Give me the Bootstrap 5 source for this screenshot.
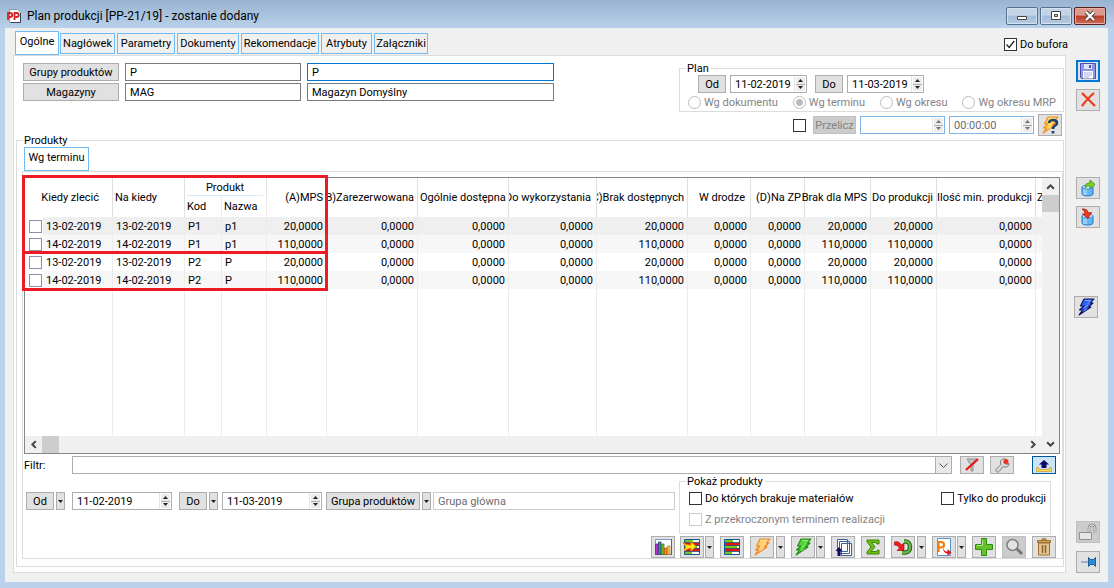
<!DOCTYPE html>
<html lang="pl">
<head>
<meta charset="utf-8">
<meta name="viewport" content="width=device-width, initial-scale=1">
<title>Plan produkcji [PP-21/19]</title>
<link href="https://cdn.jsdelivr.net/npm/bootstrap@5.3.0/dist/css/bootstrap.min.css" rel="stylesheet">
<style>
  body { font: 11px/13px Roboto, sans-serif; color: #000; background: #b9d1ea; min-height: 100vh; }
  button, input, select { font: inherit; color: inherit; border-radius: 0; }
  svg { display: block; }
  .titlebar { height: 28px; padding: 0 8px 0 6px; background: linear-gradient(#99b4d1, #b9d1ea); }
  .titlebar h1 { font: 12px/16px Roboto, sans-serif; margin: 4px 0 0 5px; }
  .winbtns { gap: 2px; }
  .winbtn { width: 32px; height: 18px; padding: 0; border: 1px solid #56708f; border-radius: 2px; background: linear-gradient(#c3d4e7 45%, #a3bcd8 50%, #b5cbe3); box-shadow: inset 0 0 0 1px #d5e2f0; }
  .winbtn.shut { border-color: #5c2018; background: linear-gradient(#dc9a8e 45%, #b93c25 50%, #cf6c55); box-shadow: inset 0 0 0 1px #e6b0a6; }
  .client { margin: 0 6px 6px 5px; background: #f0f0f0; }
  .tabrow { height: 27px; padding: 0 40px 0 10px; }
  .tab { height: 21px; padding: 0 1px; margin: 0 1px 1px; border: 1px solid #70baf5; background: #f0f0f0; text-align: center; white-space: nowrap; }
  .tab.on { height: 24px; background: #fff; margin: 0; padding-bottom: 3px; }
  .sheet { border: 1px solid #dcdcdc; background: #fff; margin: 0 0 9px 8px; min-width: 0; }
  .sidebar { width: 42px; padding: 5px 0 9px 10px; }
  .btn-w { height: 18px; border: 1px solid #adadad; background: #e1e1e1; padding: 0; text-align: center; white-space: nowrap; flex: none; }
  .btn-w:disabled { background: #ccc; border-color: #bfbfbf; color: #838383; }
  .tool { width: 24px; height: 22px; display: flex; align-items: center; justify-content: center; }
  .tool.low { height: 18px; }
  .tool svg { width: 20px; height: 18px; flex: none; }
  .tool.low svg { height: 16px; }
  .tool.focus-on { border: 2px solid #0078d7; }
  .tool.pressed { background: #cce4f7; border-color: #005499; }
  .drop { width: 9px; display: flex; align-items: center; justify-content: center; }
  .drop svg, .tool.drop svg { width: 5px; height: 3px; flex: none; }
  .w28 { width: 28px; } .w42 { width: 43px; } .w94 { width: 94px; }
  .box { height: 18px; border: 1px solid #7a7a7a; padding: 0 4px; background: #fff; min-width: 0; outline: none; }
  .box:disabled { border-color: #ccc; color: #6d6d6d; background: #fff; }
  .box.live { border-color: #0078d7; }
  .fields { display: grid; grid-template-columns: 96px 176px 247px; column-gap: 6px; row-gap: 2px; padding: 7px 0 0 9px; }
  .spin { display: flex; height: 18px; border: 1px solid #adadad; background: #fff; flex: none; }
  .spin input { flex: 1; min-width: 0; border: 0; padding: 0 0 0 4px; background: none; outline: none; }
  .spin input:disabled { color: #6d6d6d; }
  .spin.off { border-color: #7eb4ea; }
  .spin div { width: 12px; display: flex; flex-direction: column; border-left: 1px solid #e4e4e4; padding: 1px; }
  .spin div button { flex: 1; border: 0; padding: 0; background: #ececec; display: flex; align-items: center; justify-content: center; }
  .spin div button + button { border-top: 1px solid #adadad; }
  .spin div svg { width: 5px; height: 3px; }
  .spin.off svg { opacity: .6; }
  .w77 { width: 77px; } .w85 { width: 85px; } .w100 { width: 100px; }
  fieldset { border: 1px solid #dcdcdc; min-width: 0; }
  fieldset > legend { float: none; width: auto; height: 13px; font-size: 11px; line-height: 13px; margin: 0 0 0 6px; padding: 0 2px 0 1px; }
  .plan { width: 385px; }
  .side { padding: 6px 1px 0 0; }
  .tick { appearance: none; width: 13px; height: 13px; margin: 0; border: 1px solid #333; background: #fff; flex: none; }
  .tick:checked { background: #fff url("data:image/svg+xml,%3Csvg xmlns='http://www.w3.org/2000/svg' viewBox='0 0 11 11'%3E%3Cpath d='M1.5 5.5l2.7 3 5-6.500' fill='none' stroke='%23222' stroke-width='1.3'/%3E%3C/svg%3E"); }
  .tick:disabled { border-color: #ccc; }
  .tick.rowtick { border-color: #8c8fa8; display: block; margin-left: 4px; }
  .dial { appearance: none; width: 13px; height: 13px; margin: 0; border: 1px solid #bcbcbc; border-radius: 50%; background: #fff; flex: none; }
  .dial:checked { background: radial-gradient(circle, #bcbcbc 3px, #fff 4px); }
  label { display: inline-flex; align-items: center; gap: 3px; white-space: nowrap; }
  label.off { color: #838383; }
  .products { margin: -3px 1px 5px 2px; padding: 0 0 7px 5px; }
  .products > legend { margin-left: 1px; }
  .subtab { width: 65px; margin-left: 2px !important; }
  .pane { border: 1px solid #dcdcdc; padding: 5px 2px 0 1px; }
  .gridbox { border: 1px solid #828790; min-height: 276px; }
  .cells { min-width: 0; }
  .scroller { overflow: hidden; width: 100%; min-height: 0; }
  .plantable { table-layout: fixed; width: 1018px; height: 100%; border-collapse: separate; border-spacing: 0; }
  .plantable th, .plantable td { padding: 0 3px 0 2px; border-right: 1px solid #ececec; font-weight: 400; white-space: nowrap; }
  .plantable .grp th { height: 18px; border-color: #e0e0e0; }
  .plantable .sub th { height: 21px; }
  .plantable .data td { height: 18px; }
  .plantable .under { background: linear-gradient(#dbeaf8, #dbeaf8) 2px 100% / calc(100% - 5px) 1px no-repeat; text-align: center; }
  .plantable th div { display: flex; justify-content: flex-end; }
  .plantable th.tight { padding-left: 0; }
  .plantable th.tight div { overflow: hidden; }
  .plantable th.inset { padding-right: 5px; }
  .plantable .last { padding: 0 0 0 1px; border: 0; }
  .plantable .pick { padding: 0; border: 0; background: #fff !important; }
  .plantable .data td { text-align: right; }
  .plantable .data td:nth-child(2), .plantable .data td:nth-child(3), .plantable .data td:nth-child(4), .plantable .data td:nth-child(5) { text-align: left; padding-left: 3px; }
  .data:nth-child(even) td { background: #f7f7f7; }
  .data.current td { background: #efefef; }
  .bar { background: #f0f0f0; display: flex; align-items: center; flex: none; }
  .bar button { border: 0; background: none; padding: 0; width: 17px; height: 17px; display: flex; align-items: center; justify-content: center; flex: none; }
  .bar i { background: #cdcdcd; width: 17px; height: 17px; display: block; }
  .hbar { height: 17px; } .vbar { width: 17px; flex-direction: column; }
  .bar svg { width: 9px; height: 9px; }
  .mark-frame { position: absolute; left: -3px; top: -3px; width: 306px; height: 116px; border: 3px solid #ed1c24; pointer-events: none; }
  .mark-frame::after { content: ""; position: absolute; left: 0; right: 0; top: 73px; border-top: 3px solid #ed1c24; }
  .combo { appearance: none; border-color: #adadad; background: linear-gradient(#adadad, #adadad) right 15px top / 1px 100% no-repeat, url("data:image/svg+xml,%3Csvg xmlns='http://www.w3.org/2000/svg' viewBox='0 0 15 16'%3E%3Cpath fill='%23e9e9e9' d='M0 0h15v16H0z'/%3E%3Cpath d='M3.500 6.500l4 4 4-4' fill='none' stroke='%23555'/%3E%3C/svg%3E") right / 15px 16px no-repeat #fff; }
  .show { width: 372px; height: 59px; margin-right: 9px; }
  .show .row1 { padding: 4px 4px 0 9px; }
  .show .row2 { padding: 8px 0 0 9px; }
  .tools { padding-right: 4px; margin-top: 2px; }
  .tools .tool { margin-left: 6px; }
  .tools .tool.drop { width: 9px; margin-left: 1px; }
  .tools .tool.drop.far { margin-left: 2px; }
  .quick { margin: 68px 0 0 -2px; }
  .radios { padding: 3px 7px 2px 8px; }
  .recalc { gap: 4px; margin-top: 2px; padding-right: 2px; }
  .recalc .tick { margin-right: 3px; }
  .products { margin-top: -2px; }
  .filterrow { padding: 2px 4px 0 0; }
  .filterlabel { width: 48px; }
  .lower { margin-top: 1px; }
  .ranges { padding: 17px 0 0 2px; column-gap: 2px; }
</style>
</head>
<body class="d-flex flex-column">
<svg width="0" height="0" class="position-absolute" aria-hidden="true">
  <symbol id="down" viewBox="0 0 5 3"><path d="M0 0h5L2.500 3z" fill="#222"/></symbol>
  <symbol id="up" viewBox="0 0 5 3"><path d="M0 3h5L2.500 0z" fill="#222"/></symbol>
  <symbol id="bolt" viewBox="0 0 20 18"><path d="M8 1h10l-3.500 4H17l-4.500 4H15L3 17l3.500-5H3.500L8 8H4.500z" stroke-width="1.100" stroke-linejoin="round"/><path d="M9 2.500h5.500l-3 3.500M8 9.500l4-2.500M8 13l3-2" fill="none" stroke="#fff" stroke-opacity=".4"/></symbol>
  <symbol id="cyl" viewBox="0 0 20 18"><path d="M4 8v7c0 2.700 11 2.700 11 0V8z" fill="#65b5f2" stroke="#2277c7"/><path d="M6 10v6M8 10v6" stroke="#c6e6ff"/><ellipse cx="9.500" cy="8" rx="5.500" ry="2" fill="#d8eeff" stroke="#3a8ad4"/></symbol>
  <symbol id="bars" viewBox="0 0 20 18"><path fill="#fff" stroke="#0b5a94" d="M2.500 1.500h15v15h-15z"/><path fill="#7ac41c" d="M3 2h8v2.500H3zM3 8h12v2H3zM3 13.500h7V16H3z"/><path fill="#e01414" d="M3 5h14v2.500H3zM3 10.500h14V13H3z"/><path d="M3 4.500h14M3 7.500h14M3 10.500h14M3 13.500h14" stroke="#17405f" stroke-width=".8"/></symbol>
</svg>

<header class="titlebar d-flex align-items-center">
  <svg class="mt-1" width="16" height="16" viewBox="0 0 16 16"><path d="M3.500 1.500h8l3 3v10h-11z" fill="#fff" stroke="#8f9bab"/><path d="M14.500 5v9.500H5" fill="none" stroke="#354355"/><path d="M2 12V5h2c3 0 3 4 0 4H3M8.500 12V5h2c3 0 3 4 0 4h-1" fill="none" stroke="#d32222" stroke-width="1.800"/></svg>
  <h1>Plan produkcji [PP-21/19] - zostanie dodany</h1>
  <div class="winbtns d-flex ms-auto mt-1">
    <button class="winbtn" aria-label="Minimalizuj"><svg class="mx-auto" width="14" height="12" viewBox="0 0 14 12"><path d="M2.500 6.500h9v3h-9z" fill="#fff" stroke="#444"/></svg></button>
    <button class="winbtn" aria-label="Maksymalizuj"><svg class="mx-auto" width="14" height="12" viewBox="0 0 14 12"><path fill-rule="evenodd" d="M2.500 1.500h9v8h-9zM5.500 4.500h3v2h-3z" fill="#fff" stroke="#444"/></svg></button>
    <button class="winbtn shut" aria-label="Zamknij"><svg class="mx-auto" width="14" height="12" viewBox="0 0 14 12"><path d="M3 2l8 8M11 2l-8 8" stroke="#444" stroke-width="4"/><path d="M3 2l8 8M11 2l-8 8" stroke="#fff" stroke-width="2.200"/></svg></button>
  </div>
</header>

<main class="client flex-grow-1 d-flex flex-column">
  <div class="tabrow d-flex align-items-end">
    <button class="tab on" style="width:44px">Ogólne</button>
    <button class="tab" style="width:55px">Nagłówek</button>
    <button class="tab" style="width:58px">Parametry</button>
    <button class="tab" style="width:62px">Dokumenty</button>
    <button class="tab" style="width:78px">Rekomendacje</button>
    <button class="tab" style="width:51px">Atrybuty</button>
    <button class="tab" style="width:54px">Załączniki</button>
    <label class="ms-auto align-self-end pb-1"><input type="checkbox" class="tick" checked>Do bufora</label>
  </div>

  <div class="d-flex flex-grow-1">
    <section class="sheet flex-grow-1 d-flex flex-column">
      <div class="d-flex justify-content-between">
        <div class="fields align-content-start">
          <button class="btn-w">Grupy produktów</button><input class="box" value="P" aria-label="Kod grupy"><input class="box live" value="P" aria-label="Nazwa grupy">
          <button class="btn-w">Magazyny</button><input class="box" value="MAG" aria-label="Kod magazynu"><input class="box" value="Magazyn Domyślny" aria-label="Nazwa magazynu">
        </div>
        <div class="side">
          <fieldset class="plan">
            <legend>Plan</legend>
            <div class="d-flex" style="padding-left:18px">
              <button class="btn-w w28 me-1">Od</button>
              <div class="spin w77 me-2"><input value="11-02-2019" aria-label="Plan od"><div><button aria-label="Więcej"><svg><use href="#up"/></svg></button><button aria-label="Mniej"><svg><use href="#down"/></svg></button></div></div>
              <button class="btn-w w28 me-1">Do</button>
              <div class="spin w77"><input value="11-03-2019" aria-label="Plan do"><div><button aria-label="Więcej"><svg><use href="#up"/></svg></button><button aria-label="Mniej"><svg><use href="#down"/></svg></button></div></div>
            </div>
            <div class="d-flex justify-content-between radios">
              <label class="off"><input type="radio" name="wg" class="dial" disabled>Wg dokumentu</label>
              <label class="off"><input type="radio" name="wg" class="dial" checked disabled>Wg terminu</label>
              <label class="off"><input type="radio" name="wg" class="dial" disabled>Wg okresu</label>
              <label class="off"><input type="radio" name="wg" class="dial" disabled>Wg okresu MRP</label>
            </div>
          </fieldset>
          <div class="d-flex justify-content-end align-items-center recalc">
            <input type="checkbox" class="tick" aria-label="Przelicz w terminie">
            <button class="btn-w w42" disabled>Przelicz</button>
            <div class="spin off w85"><input disabled aria-label="Data"><div><button disabled aria-label="Więcej"><svg><use href="#up"/></svg></button><button disabled aria-label="Mniej"><svg><use href="#down"/></svg></button></div></div>
            <div class="spin off w85"><input disabled value="00:00:00" aria-label="Godzina"><div><button disabled aria-label="Więcej"><svg><use href="#up"/></svg></button><button disabled aria-label="Mniej"><svg><use href="#down"/></svg></button></div></div>
            <button class="btn-w tool" aria-label="Pomoc przeliczania"><svg viewBox="0 0 20 18"><use href="#bolt" fill="#ffd24a" stroke="#f58a1e"/><path d="M9 7c0-4 8-4 8 0 0 3-4 2-4 6M13 15v2.500" fill="none" stroke="#1f4468" stroke-width="2.600"/></svg></button>
          </div>
        </div>
      </div>

      <fieldset class="products flex-grow-1 d-flex flex-column">
        <legend>Produkty</legend>
        <button class="tab on subtab align-self-start">Wg terminu</button>
        <div class="pane flex-grow-1 d-flex flex-column">
          <div class="gridbox flex-grow-1 d-flex position-relative">
            <div class="cells flex-grow-1 d-flex flex-column">
              <div class="scroller flex-grow-1">
                <table class="plantable">
                  <colgroup><col style="width:18px"><col style="width:70px"><col style="width:72px"><col style="width:37px"><col style="width:45px"><col style="width:60px"><col style="width:91px"><col style="width:91px"><col style="width:88px"><col style="width:91px"><col style="width:63px"><col style="width:54px"><col style="width:66px"><col style="width:66px"><col style="width:99px"><col style="width:7px"></colgroup>
                  <thead>
                    <tr class="grp"><th rowspan="2" colspan="2"><div style="padding-right:10px">Kiedy zlecić</div></th><th rowspan="2">Na kiedy</th><th colspan="2" class="under">Produkt</th><th rowspan="2"><div>(A)MPS</div></th><th rowspan="2" class="tight"><div>(B)Zarezerwowana</div></th><th rowspan="2"><div class="justify-content-start">Ogólnie dostępna</div></th><th rowspan="2" class="tight inset"><div>Do wykorzystania</div></th><th rowspan="2" class="tight"><div>(C)Brak dostępnych</div></th><th rowspan="2" class="inset"><div>W drodze</div></th><th rowspan="2"><div>(D)Na ZP</div></th><th rowspan="2"><div>Brak dla MPS</div></th><th rowspan="2"><div>Do produkcji</div></th><th rowspan="2"><div>Ilość min. produkcji</div></th><th rowspan="2" class="last">Z</th></tr>
                    <tr class="sub"><th>Kod</th><th>Nazwa</th></tr>
                  </thead>
                  <tbody>
                    <tr class="data current"><td class="pick"><input type="checkbox" class="tick rowtick" aria-label="Wybierz 1"></td><td>13-02-2019</td><td>13-02-2019</td><td>P1</td><td>p1</td><td>20,0000</td><td>0,0000</td><td>0,0000</td><td>0,0000</td><td>20,0000</td><td>0,0000</td><td>0,0000</td><td>20,0000</td><td>20,0000</td><td>0,0000</td><td class="last"></td></tr>
                    <tr class="data"><td class="pick"><input type="checkbox" class="tick rowtick" aria-label="Wybierz 2"></td><td>14-02-2019</td><td>14-02-2019</td><td>P1</td><td>p1</td><td>110,0000</td><td>0,0000</td><td>0,0000</td><td>0,0000</td><td>110,0000</td><td>0,0000</td><td>0,0000</td><td>110,0000</td><td>110,0000</td><td>0,0000</td><td class="last"></td></tr>
                    <tr class="data"><td class="pick"><input type="checkbox" class="tick rowtick" aria-label="Wybierz 3"></td><td>13-02-2019</td><td>13-02-2019</td><td>P2</td><td>P</td><td>20,0000</td><td>0,0000</td><td>0,0000</td><td>0,0000</td><td>20,0000</td><td>0,0000</td><td>0,0000</td><td>20,0000</td><td>20,0000</td><td>0,0000</td><td class="last"></td></tr>
                    <tr class="data"><td class="pick"><input type="checkbox" class="tick rowtick" aria-label="Wybierz 4"></td><td>14-02-2019</td><td>14-02-2019</td><td>P2</td><td>P</td><td>110,0000</td><td>0,0000</td><td>0,0000</td><td>0,0000</td><td>110,0000</td><td>0,0000</td><td>0,0000</td><td>110,0000</td><td>110,0000</td><td>0,0000</td><td class="last"></td></tr>
                    <tr class="rest"><td class="pick"></td><td></td><td></td><td></td><td></td><td></td><td></td><td></td><td></td><td></td><td></td><td></td><td></td><td></td><td></td><td class="last"></td></tr>
                  </tbody>
                </table>
              </div>
              <div class="bar hbar">
                <button aria-label="W lewo"><svg viewBox="0 0 8 8"><path d="M6 1L3 4l3 3" fill="none" stroke="#444" stroke-width="1.800"/></svg></button><i></i>
                <button class="ms-auto" aria-label="W prawo"><svg viewBox="0 0 8 8"><path d="M2 1l3 3-3 3" fill="none" stroke="#444" stroke-width="1.800"/></svg></button>
              </div>
            </div>
            <div class="bar vbar">
              <button aria-label="W górę"><svg viewBox="0 0 8 8"><path d="M1 6l3-3 3 3" fill="none" stroke="#444" stroke-width="1.800"/></svg></button><i></i>
              <button class="mt-auto" aria-label="W dół"><svg viewBox="0 0 8 8"><path d="M1 2l3 3 3-3" fill="none" stroke="#444" stroke-width="1.800"/></svg></button>
            </div>
            <div class="mark-frame"></div>
          </div>

          <div class="d-flex align-items-center filterrow">
            <label for="filtr" class="filterlabel">Filtr:</label>
            <select id="filtr" class="box combo flex-grow-1"><option></option></select>
            <button class="btn-w tool low" style="margin-left:8px" aria-label="Wyczyść filtr"><svg viewBox="0 0 20 16"><path d="M5 2h10l-4 6v6H9V8z" fill="#c3c3c3" stroke="#8d8d8d"/><path d="M4 13L16 2" stroke="#e11" stroke-width="2.200"/></svg></button>
            <button class="btn-w tool low" style="margin-left:6px" aria-label="Konstruktor filtra"><svg viewBox="0 0 20 16"><path d="M4 12.500l5-5c-2-4 2-7 5-5l-2 3 2 2 3-1c0 4-4 4-6 3l-4 5c-1 1.500-4 0-3-2z" fill="#ddd" stroke="#777"/><circle cx="14" cy="4.500" r="2.500" fill="#e8321c"/></svg></button>
            <button class="btn-w tool low pressed" style="margin-left:18px" aria-label="Pokaż filtr"><svg viewBox="0 0 20 16"><path d="M2.500 10.500h2v2h11v-2h2v4h-15z" fill="#ffde59" stroke="#c9962a" stroke-width=".7"/><path d="M10 3l5 4.500h-2.500V11h-5V7.500H5z" fill="#120a60"/></svg></button>
          </div>

          <div class="d-flex justify-content-between lower">
            <div class="d-flex align-items-start flex-grow-1 ranges">
              <button class="btn-w w28">Od</button><button class="btn-w drop" aria-label="Rozwiń"><svg><use href="#down"/></svg></button>
              <div class="spin w100" style="margin:0 5px"><input value="11-02-2019" aria-label="Od"><div><button aria-label="Więcej"><svg><use href="#up"/></svg></button><button aria-label="Mniej"><svg><use href="#down"/></svg></button></div></div>
              <button class="btn-w w28">Do</button><button class="btn-w drop" aria-label="Rozwiń"><svg><use href="#down"/></svg></button>
              <div class="spin w100" style="margin:0 2px"><input value="11-03-2019" aria-label="Do"><div><button aria-label="Więcej"><svg><use href="#up"/></svg></button><button aria-label="Mniej"><svg><use href="#down"/></svg></button></div></div>
              <button class="btn-w w94">Grupa produktów</button><button class="btn-w drop" aria-label="Rozwiń"><svg><use href="#down"/></svg></button>
              <input class="box flex-grow-1 me-1" disabled value="Grupa główna" aria-label="Grupa">
            </div>
            <fieldset class="show">
              <legend>Pokaż produkty</legend>
              <div class="row1 d-flex justify-content-between"><label><input type="checkbox" class="tick">Do których brakuje materiałów</label><label><input type="checkbox" class="tick">Tylko do produkcji</label></div>
              <div class="row2"><label class="off"><input type="checkbox" class="tick" disabled>Z przekroczonym terminem realizacji</label></div>
            </fieldset>
          </div>

          <div class="tools d-flex justify-content-end">
            <button class="btn-w tool" aria-label="Wykres"><svg viewBox="0 0 20 18"><path fill="#fff" stroke="#7f9cc4" d="M2.500 1.500h16v15h-16z"/><path fill="none" stroke="#4a648c" d="M18.500 1v15.500H8"/><g stroke-width=".8"><path d="M2.500 6H5v10.500H2.500z" fill="#c32bd8" stroke="#7f1391"/><path d="M5.500 4H8v12.500H5.500z" fill="#3793b5" stroke="#21425f"/><path d="M8.500 6H11v10.500H8.500z" fill="#73be1e" stroke="#3f7d0c"/><path d="M11.500 10H14v6.500h-2.500z" fill="#ff8c1a" stroke="#c45200"/><path d="M14.500 8H17v8.500h-2.500z" fill="#efc560" stroke="#b3842a"/></g></svg></button>
            <button class="btn-w tool" style="margin-left:5px" aria-label="Bilans"><svg viewBox="0 0 20 18"><use href="#bars"/><path d="M1 4.500l3 2c2 .5 4 .5 5 .5V3.500l5 5-5 4.500v-3c-3 1-5 1-6 3l-1-1 2-3z" fill="#ffe81a" stroke="#f18a00"/></svg></button><button class="btn-w tool drop" aria-label="Rozwiń"><svg><use href="#down"/></svg></button>
            <button class="btn-w tool" aria-label="Harmonogram"><svg><use href="#bars"/></svg></button>
            <button class="btn-w tool" aria-label="Generuj"><svg><use href="#bolt" fill="#ffcf70" stroke="#f5811e"/></svg></button><button class="btn-w tool drop far" aria-label="Rozwiń"><svg><use href="#down"/></svg></button>
            <button class="btn-w tool" aria-label="Realizuj"><svg><use href="#bolt" fill="#4fd335" stroke="#1b8a12"/></svg></button><button class="btn-w tool drop" aria-label="Rozwiń"><svg><use href="#down"/></svg></button>
            <button class="btn-w tool" aria-label="Kopie"><svg viewBox="0 0 20 18"><g fill="#fff" stroke="#3f6190"><path d="M8.500 5.500h10v12h-10zM6.500 3.500h10v12h-10zM4.500 1.500h10v12h-10z"/></g><path d="M6 9l3.500 4H7.500v5h-3v-5h-2z" fill="#120a60"/></svg></button>
            <button class="btn-w tool" aria-label="Suma"><svg viewBox="0 0 20 18"><path d="M4 2h12v4h-2l-1-1.500H8.500L12 9l-4 4.500h5.500L14.500 12H16v4H4v-2l4-5-4-5z" fill="#6fbe13" stroke="#3c8408"/></svg></button>
            <button class="btn-w tool" aria-label="Zasób"><svg viewBox="0 0 20 18"><path d="M11 3.500h1.500c6 0 6 11 0 11H9" fill="none" stroke="#22641a" stroke-width="4.500"/><path d="M11 3.500h1.500c6 0 6 11 0 11H9" fill="none" stroke="#6cb54a" stroke-width="2.300"/><path d="M1.500 4c3-1 5 0 7 3l2.500-2v7.500H4L6.500 10C5 8 4 7 1.500 7z" fill="#f01c1c" stroke="#900" stroke-width=".6"/></svg></button><button class="btn-w tool drop far" aria-label="Rozwiń"><svg><use href="#down"/></svg></button>
            <button class="btn-w tool" aria-label="Planowanie"><svg viewBox="0 0 20 18"><path fill="#fff" stroke="#5a92c8" d="M3.500.500h13v17h-13z"/><path d="M4.500 14V4H7c4 0 4 5.500 0 5.500H5" fill="none" stroke="#f07d13" stroke-width="2.200"/><path d="M9 10c1 3 3 3.500 4.500 3.500V11l4 3.500-4 3.500v-2.500C11 15.500 9 13 9 10z" fill="#d81818"/></svg></button><button class="btn-w tool drop" aria-label="Rozwiń"><svg><use href="#down"/></svg></button>
            <button class="btn-w tool" aria-label="Dodaj"><svg viewBox="0 0 20 18"><path d="M7.500.500h5v6H18.500v5h-6v6h-5v-6h-6v-5h6z" fill="#66c22a" stroke="#2f8f12"/><path d="M8.500 2v5.500H3" fill="none" stroke="#b5e88c"/></svg></button>
            <button class="btn-w tool" disabled aria-label="Podgląd"><svg viewBox="0 0 20 18"><path d="M12 10l6 6" stroke="#777" stroke-width="3"/><circle cx="8.500" cy="7" r="5.500" fill="#e3e3e3" stroke="#808080" stroke-width="1.500"/></svg></button>
            <button class="btn-w tool" aria-label="Usuń"><svg viewBox="0 0 20 18"><path d="M4.500 5h11v12h-11z" fill="#e5c592" stroke="#9b702f"/><path d="M3.500 2.500h13v2h-13zM8 2V.800h4V2" fill="#d4a963" stroke="#9b702f"/><path d="M8.500 7v8M11.500 7v8" stroke="#8a6228" stroke-width="1.500"/></svg></button>
          </div>
        </div>
      </fieldset>
    </section>

    <aside class="sidebar d-flex flex-column">
      <button class="btn-w tool focus-on" aria-label="Zapisz"><svg viewBox="0 0 20 18"><path d="M2.500 1.500h15v15h-14l-1-1z" fill="#8c95e8" stroke="#4950b5"/><path d="M6 2h8v5H6z" fill="#dfe3f7"/><path d="M11 3h2v3h-2z" fill="#4950b5"/><path d="M5 9h10v7.500H5z" fill="#fff"/><path d="M6 11h8M6 13h8M6 15h5" stroke="#a8aedb"/></svg></button>
      <button class="btn-w tool" style="margin-top:7px" aria-label="Anuluj"><svg viewBox="0 0 20 18"><path d="M4 2c4 4 8 8 13 13M16 2C11 6 7 11 4 15" fill="none" stroke="#f03a17" stroke-width="2.200"/></svg></button>
      <button class="btn-w tool" style="margin-top:66px" aria-label="Eksport"><svg viewBox="0 0 20 18"><use href="#cyl"/><path d="M7 9c0-3 1-5 5-5V1l5 4.500-5 4V7c-2 0-3 0-5 2z" fill="#7ed321" stroke="#35870b" stroke-width=".8"/></svg></button>
      <button class="btn-w tool" style="margin-top:7px" aria-label="Import"><svg viewBox="0 0 20 18"><use href="#cyl"/><path d="M4 1c4 0 6 1 6 4l3.500-.5L10 10.500 4.500 6H7c0-2-1-4-3-5z" fill="#f53a20" stroke="#a11405" stroke-width=".8"/></svg></button>
      <button class="btn-w tool quick" aria-label="Przelicz plan"><svg><use href="#bolt" fill="#2c62f5" stroke="#101060"/></svg></button>
      <button class="btn-w tool mt-auto" disabled aria-label="Blokada"><svg viewBox="0 0 20 18"><path d="M11 9V5c0-4 6-4 6 0v5" fill="none" stroke="#8b8b8b" stroke-width="2.600"/><path d="M11 9V5c0-4 6-4 6 0v5" fill="none" stroke="#eee"/><path d="M1.500 9.500h12v7h-12z" fill="#e6e6e6" stroke="#909090"/></svg></button>
      <button class="btn-w tool" style="margin-top:8px" aria-label="Przypnij"><svg viewBox="0 0 20 18"><path d="M3 9h8" stroke="#8ba3b8" stroke-width="1.500"/><path d="M10.500 4.500v9l2-2h3l2 2v-9l-2 2h-3z" fill="#2f8ad4" stroke="#1c5f9c"/></svg></button>
    </aside>
  </div>
</main>
<script src="https://cdn.jsdelivr.net/npm/bootstrap@5.3.0/dist/js/bootstrap.bundle.min.js"></script>
</body>
</html>
